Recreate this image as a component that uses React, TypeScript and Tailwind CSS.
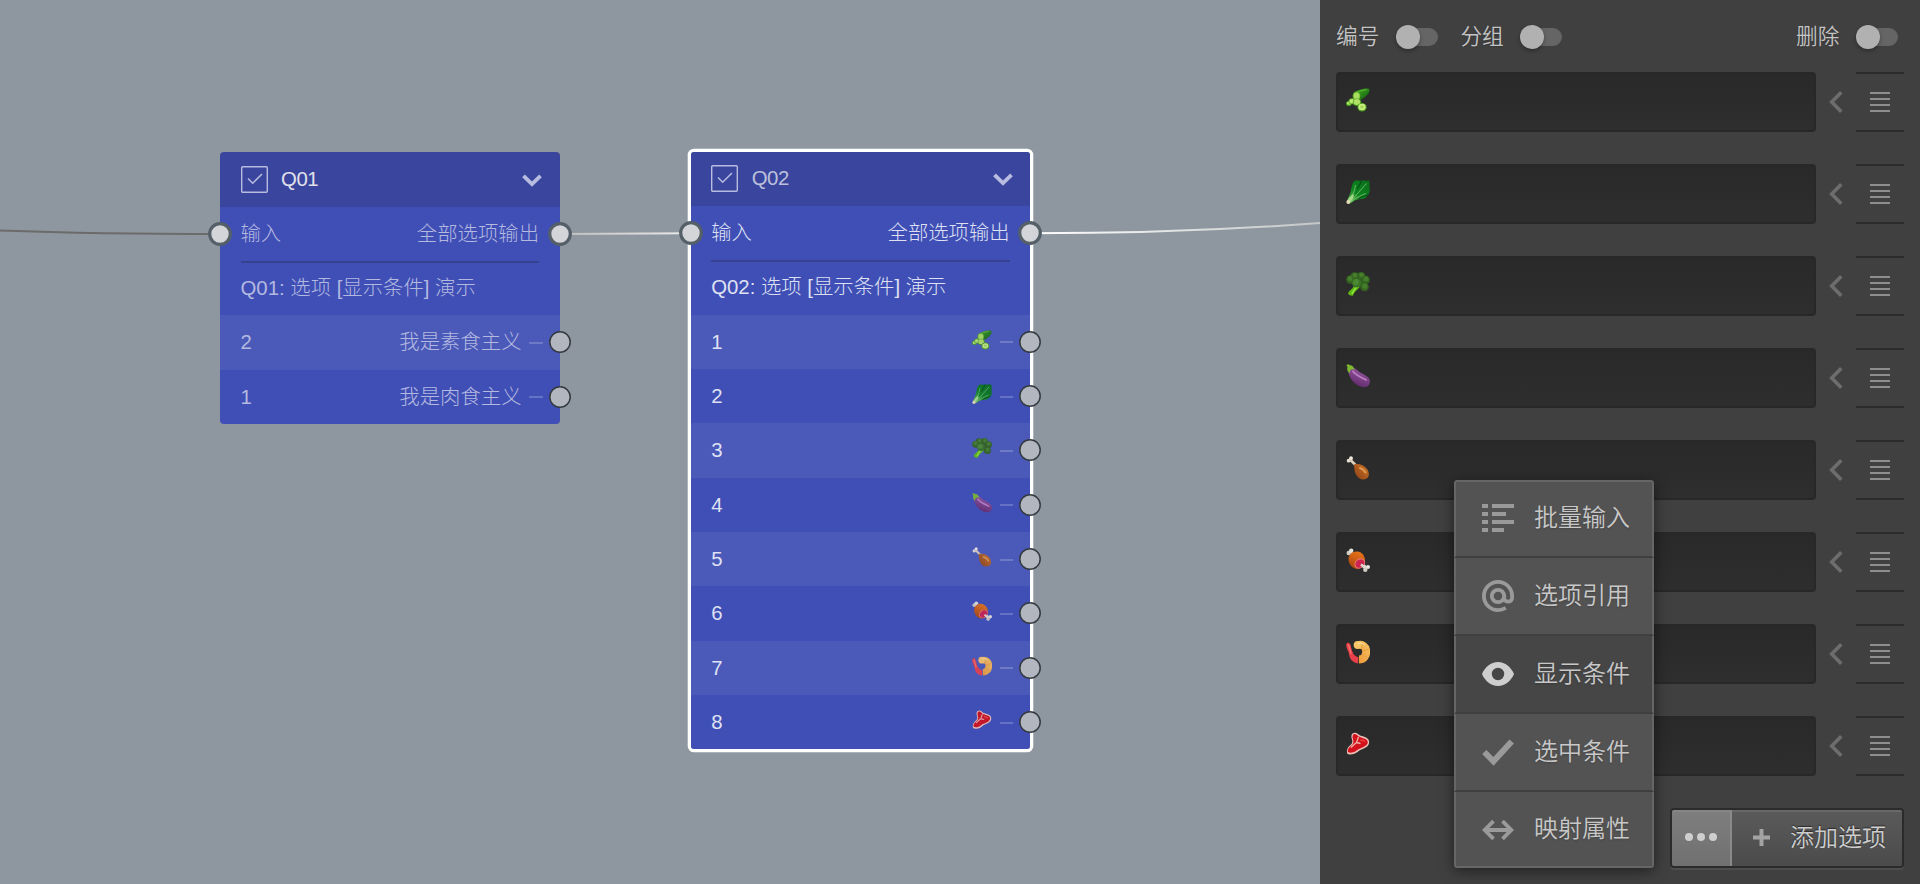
import type { ReactNode } from "react";

type Food = "cucumber" | "leaf" | "broccoli" | "eggplant" | "drumstick" | "meat" | "shrimp" | "steak";

const foods: Food[] = ["cucumber", "leaf", "broccoli", "eggplant", "drumstick", "meat", "shrimp", "steak"];

const foodArt: Record<Food, ReactNode> = {
  cucumber: (
    <>
      <path d="M8 5C11 1.800 18 .3 22 .5c2.200.3 2 3-.2 5.800C19.500 9.300 16 11.500 13 12.500Z" fill="url(#cucumberSkin)" />
      <path d="M12 4C14 2.700 17.500 1.700 20.500 1.900" stroke="#5cbb30" strokeWidth="1" fill="none" />
      <ellipse cx="2.800" cy="15.500" rx="2.800" ry="2.500" fill="#4aa51e" />
      <ellipse cx="2.900" cy="15.200" rx="1.900" ry="1.600" fill="#b9e86c" />
      <ellipse cx="10.500" cy="8" rx="3.900" ry="4.500" fill="#5aac25" />
      <ellipse cx="10.600" cy="8" rx="3" ry="3.600" fill="#a8dd5e" />
      <ellipse cx="6" cy="13.300" rx="3.400" ry="3" fill="#57a724" />
      <ellipse cx="6" cy="13.200" rx="2.500" ry="2.200" fill="#bce973" />
      <ellipse cx="11" cy="14.200" rx="4.200" ry="3.800" fill="#4d9e1f" />
      <ellipse cx="10.900" cy="14" rx="3.300" ry="2.900" fill="#b1e164" />
      <ellipse cx="16" cy="19.200" rx="4.600" ry="4.200" fill="#4c9f1e" />
      <ellipse cx="16" cy="19" rx="3.600" ry="3.200" fill="#cbee88" />
      <ellipse cx="16" cy="19" rx="2.100" ry="1.700" fill="#aada5a" />
    </>
  ),
  leaf: (
    <>
      <path d="M1 22.500C1.500 18 4.200 15 5 10.500 5.700 6 6.500 2 9 .8c2-.5 3.500.2 5 0 3-.6 5.500.1 9-.3 1.200 2.500.2 4.500.6 7 .3 3 .2 5.500-1.600 7.500-1.500 2.500-4 4-6.500 4-4 0-6.500 1-9.500 3.200-2 1.500-4.500 2-5 .3Z" fill="url(#leafBlade)" />
      <path d="M15.500.8C14.500 4 13 6.500 11 9M22 15c-3 .5-6 1.500-9 3.500" stroke="#045014" strokeWidth="1.200" fill="none" />
      <path d="M3 22C6 17 8.500 12 9.500 5M4 22C9 17 15 9.500 20.500 3.500M5 22c4-4 9-6 15-8.500" stroke="#8fd47c" strokeWidth=".7" fill="none" />
      <path d="M1 22C1.800 19 4 16.500 7 14c1 .8 1 3-.5 5L3.500 23Z" fill="#a9d98a" />
      <circle cx="2.300" cy="22" r="1.900" fill="#e6dcb6" />
    </>
  ),
  broccoli: (
    <>
      <path d="M8 12c1 4-5 6-6 9.500C3 23.500 6 24 7 23.500c1.500-4.500 5-5.500 7.500-9.500Z" fill="#5dba16" />
      <path d="M11.500 14c-2 2.500-4.500 4.500-5.500 8" stroke="#9de83a" strokeWidth="1.300" fill="none" />
      <g fill="#34641f">
        <circle cx="12.500" cy="8" r="7" />
        <circle cx="4.500" cy="7.500" r="4.300" />
        <circle cx="8.500" cy="4.200" r="4" />
        <circle cx="15" cy="4" r="4" />
        <circle cx="19.500" cy="8" r="4.400" />
        <circle cx="18.500" cy="15" r="4.300" />
      </g>
      <g fill="#457e2c">
        <circle cx="4" cy="6.500" r="2.500" />
        <circle cx="9" cy="3.200" r="2.300" />
        <circle cx="15.500" cy="3" r="2.300" />
        <circle cx="20" cy="7" r="2.500" />
        <circle cx="18.800" cy="14.200" r="2.600" />
      </g>
      <circle cx="10.500" cy="11" r="4.500" fill="#3b7426" />
      <circle cx="10" cy="10" r="2.900" fill="#4c8933" />
    </>
  ),
  eggplant: (
    <>
      <path d="M2.500 5C4.500 2.500 8 3 11 6c3.500 3.500 8 4.200 11.200 7.500 2.300 2.500 2.300 6.500-.2 8.500-3 2.200-8.500 1.200-12.500-2.200C5.500 16.500 1.500 10 2.500 5Z" fill="url(#eggplantSkin)" />
      <path d="M7 7.500C9.500 11 14 13 20 15.800" stroke="#bd80c3" strokeWidth="1.800" strokeLinecap="round" fill="none" />
      <path d="M.3 1 2.300.2 4 1.200c2.300 0 4 1.800 4.500 4.600-2-.8-3-.8-4.200.5-.5 1.300-.5 2-.8 3C1.200 7.500.8 5 1.500 3Z" fill="#7dba30" />
    </>
  ),
  drumstick: (
    <>
      <path d="m4.500 4 6 6" stroke="#dccdb9" strokeWidth="2.600" />
      <circle cx="2.600" cy="4.700" r="1.900" fill="#e5ddd0" />
      <circle cx="5" cy="2.200" r="1.900" fill="#efe9df" />
      <path d="M8 8.500c4-1.500 10 .5 13 4.500 2.500 3.500 2.500 7.500-.3 9.500-3.700 2.300-9 .5-11-4.500C8.300 15 8.300 12 8 8.500Z" fill="url(#roast)" />
      <path d="M14 12c2.500.8 4.500 2.500 5.500 4.500" stroke="#e39a50" strokeWidth="2" strokeLinecap="round" fill="none" />
    </>
  ),
  meat: (
    <>
      <path d="m4 4.500 4 4M15 15l5 5" stroke="#d8d5cd" strokeWidth="3.200" />
      <circle cx="2.700" cy="5" r="2.200" fill="#cfccc4" />
      <circle cx="5.200" cy="2.700" r="2.200" fill="#e6e4dd" />
      <path d="M2.500 11C2.500 6 7 2.700 12 3.500c4 .8 7 4.500 7 9 0 4-4 8.500-8 8.500-4.700-.5-8.500-5-8.500-10Z" fill="url(#ham)" />
      <ellipse cx="13.800" cy="15.500" rx="5.800" ry="4.700" transform="rotate(-38 13.800 15.500)" fill="#e8776a" />
      <ellipse cx="13.900" cy="15.600" rx="4.800" ry="3.800" transform="rotate(-38 13.900 15.600)" fill="#cb2450" />
      <path d="m15 16.500 5 4" stroke="#dedbd3" strokeWidth="2.600" />
      <circle cx="22" cy="18.900" r="2" fill="#e6e4dd" />
      <circle cx="19.300" cy="21.700" r="2.200" fill="#cfccc4" />
    </>
  ),
  shrimp: (
    <>
      <path d="M.2 4.500C1 2 3.500 2 4.500 4.800L6 10.500C7 14.500 9.500 16.500 12.500 17.500l-.5 6C7 22.500 3.800 19.500 3.200 15 2.800 11 0 8.500.2 4.500Z" fill="#e8404a" />
      <path d="M2.300 4.500C3.300 8.500 4.500 10 5 14" stroke="#f4756f" strokeWidth="1.300" fill="none" />
      <path d="M12 5.500c4-2 8.200 1 8.200 6.300 0 4.700-3 7.700-7.200 7.700" stroke="url(#shrimpCoat)" strokeWidth="8" fill="none" />
      <circle cx="11.700" cy="5" r="4" fill="#f9c367" />
      <path d="M16.500 3 15 9M23 9l-6 2M21.500 17.500 16.500 14.500" stroke="#e59a3c" strokeWidth=".8" fill="none" />
      <path d="M12 3.500c2-.7 4.500-.3 6 1" stroke="#fdd98f" strokeWidth="1.500" strokeLinecap="round" fill="none" />
    </>
  ),
  steak: (
    <>
      <path d="M5.500 3.500C6 .5 9.500-.3 12 2c2.500 2.500 7 2 10 5 2 2.500 1.300 6-1.500 8-4 2.500-6.500 2.500-9 5-2.500 2-6 3-9 2.300C.3 21.500.5 18 2 15.500c1.300-2 4-3 4.300-5.500C6.500 7.500 5 6 5.500 3.500Z" fill="#ecc0b9" />
      <path d="M6.700 3.500C7.300 1.700 9.300 1.300 11 3c2.500 3 7.500 2.500 10 5.200 1.500 2 .8 4-1.500 5.500-3.500 2.300-6.500 2.500-9 4.800-2 1.800-5 2.500-7.500 2-1.800-.5-1.300-2.700-.3-4.300 1.300-2 4.300-3 4.700-6C7.700 7.500 6 6 6.700 3.500Z" fill="#d4121b" />
      <path d="m12.500 5-2 5.500L5 15.500M10.500 10.500l4 1" stroke="#f0b2aa" strokeWidth="1.300" fill="none" />
      <path d="M14.500 8c2 .2 3 .5 4.500 1.500" stroke="#ee4544" strokeWidth="1.500" fill="none" />
    </>
  ),
};

function FoodDefs() {
  return (
    <svg width="0" height="0" className="absolute">
      <defs>
        <linearGradient id="cucumberSkin" x1="0" y1="0" x2="1" y2="1">
          <stop offset="0" stopColor="#49b51f" />
          <stop offset="1" stopColor="#0b5311" />
        </linearGradient>
        <linearGradient id="leafBlade" x1="1" y1="0" x2="0" y2="1">
          <stop offset="0" stopColor="#0a6d1a" />
          <stop offset=".55" stopColor="#0b8220" />
          <stop offset="1" stopColor="#6fc25a" />
        </linearGradient>
        <linearGradient id="eggplantSkin" x1=".7" y1="0" x2=".3" y2="1">
          <stop offset="0" stopColor="#9c5aa6" />
          <stop offset="1" stopColor="#5d2868" />
        </linearGradient>
        <linearGradient id="roast" x1="1" y1="0" x2="0" y2="1">
          <stop offset="0" stopColor="#cf7629" />
          <stop offset="1" stopColor="#8a3f13" />
        </linearGradient>
        <linearGradient id="ham" x1=".6" y1="0" x2=".2" y2="1">
          <stop offset="0" stopColor="#e87419" />
          <stop offset="1" stopColor="#a8420e" />
        </linearGradient>
        <linearGradient id="shrimpCoat" x1="1" y1="0" x2="0" y2="1">
          <stop offset="0" stopColor="#f6ba59" />
          <stop offset="1" stopColor="#ee9c3c" />
        </linearGradient>
      </defs>
    </svg>
  );
}

function FoodIcon({ kind, className }: { kind: Food; className: string }) {
  return (
    <svg viewBox="0 0 24 24" className={className}>
      {foodArt[kind]}
    </svg>
  );
}

function MainPort({ side }: { side: "left" | "right" }) {
  return (
    <svg
      width="24"
      height="24"
      viewBox="0 0 24 24"
      className={`absolute top-[15px] ${side === "left" ? "-left-[12px]" : "-right-[12px]"}`}
    >
      <circle cx="12" cy="12" r="10.300" fill="#d4d5d9" stroke="#545f67" strokeWidth="3.200" />
    </svg>
  );
}

function OptionRow({ code, shaded, children }: { code: string; shaded: boolean; children: ReactNode }) {
  return (
    <div
      className={`relative flex h-[54.33px] items-center justify-between pl-[20.5px] pr-[17px] ${
        shaded ? "bg-[#4b59b9]" : "bg-[#404fb5]"
      }`}
    >
      <span>{code}</span>
      <span className="flex items-center">
        {children}
        <span className="ml-[7.5px] mt-px h-[2px] w-[13.500px] bg-white/20" />
      </span>
      <svg width="22" height="22" viewBox="0 0 22 22" className="absolute -right-[11px] top-[16px]">
        <circle cx="11" cy="11" r="10.200" fill="#b2b6be" stroke="#343a40" strokeWidth="1.500" />
      </svg>
    </div>
  );
}

interface NodeCardProps {
  title: string;
  heading: string;
  frame: string;
  titleTone: string;
  tone: string;
  corner: string;
  children: ReactNode;
}

function NodeCard({ title, heading, frame, titleTone, tone, corner, children }: NodeCardProps) {
  return (
    <section className={`absolute w-[339.5px] text-[20.360px] leading-none ${frame} ${tone}`}>
      <header className={`flex h-[54.33px] items-center bg-[#3a459d] pl-[20.5px] pr-[17.500px] ${corner}`}>
        <svg width="27" height="27" viewBox="0 0 27 27" fill="none" className="text-[#b8bce0]">
          <rect x=".7" y=".7" width="25.600" height="25.600" rx="1" stroke="currentColor" strokeWidth="1.400" />
          <path d="m7 12.500 4.700 4.700L21 8" stroke="currentColor" strokeWidth="1.500" />
        </svg>
        <span className={`-mt-px ml-[13.5px] flex-1 tracking-[-0.4px] ${titleTone}`}>{title}</span>
        <svg width="20" height="13" viewBox="0 0 20 13" fill="none" className="mt-px">
          <path d="m1.500 1.800 8.500 8.400 8.500-8.400" stroke="#b8bce0" strokeWidth="3.800" />
        </svg>
      </header>
      <div className="relative flex h-[54.33px] items-center justify-between bg-[#404fb5] px-[20.5px] font-light">
        <MainPort side="left" />
        <span>输入</span>
        <span>全部选项输出</span>
        <MainPort side="right" />
      </div>
      <div className="h-[54.33px] bg-[#404fb5] px-[20.5px] font-light">
        <div className="flex h-full items-center border-t-2 border-[#36418f] pb-[3px]">{heading}</div>
      </div>
      <div className="font-light">{children}</div>
    </section>
  );
}

function Toggle({ label }: { label: string }) {
  return (
    <label className="flex items-center gap-[16.500px] text-[21.700px] leading-none text-[#c4c4c4]">
      <span>{label}</span>
      <span className="relative flex h-6 w-[42px] items-center justify-end">
        <span className="h-[18px] w-9 rounded-full bg-[#656565]" />
        <span className="absolute left-0 top-0 size-6 rounded-full bg-[#b1b1b1] shadow-[0_2px_4px_rgba(0,0,0,0.3)]" />
      </span>
    </label>
  );
}

function OptionEditor({ kind }: { kind: Food }) {
  return (
    <li className="flex h-[60px] items-center">
      <div className="flex h-full w-[480px] rounded-[4px] border-2 border-[#282828] bg-linear-to-b from-[#292929] to-[#2e2e2e] pl-2 pt-[14px]">
        <FoodIcon kind={kind} className="size-6" />
      </div>
      <svg width="14" height="24" viewBox="0 0 14 24" fill="none" className="ml-[13px]">
        <path d="M12.300 2.300 2.700 12l9.600 9.700" stroke="#6d6d6d" strokeWidth="3.600" />
      </svg>
      <div className="ml-[13px] flex h-full w-12 flex-col items-center justify-center gap-1 border-y-2 border-[#2b2b2b]">
        <span className="h-0.5 w-5 bg-[#8e8e8e]" />
        <span className="h-0.5 w-5 bg-[#8e8e8e]" />
        <span className="h-0.5 w-5 bg-[#8e8e8e]" />
        <span className="h-0.5 w-5 bg-[#8e8e8e]" />
      </div>
    </li>
  );
}

const menuItems: { label: string; active?: boolean; icon: ReactNode }[] = [
  {
    label: "批量输入",
    icon: (
      <path
        d="M0 2h6v4H0zM10 2h22v4H10zM0 10h6v4H0zM10 10h14v4H10zM0 18h6v4H0zM10 18h22v4H10zM0 26h6v4H0zM10 26h12v4H10z"
        fill="currentColor"
      />
    ),
  },
  {
    label: "选项引用",
    icon: (
      <g stroke="currentColor" strokeWidth="3.800" fill="none">
        <circle cx="16" cy="16" r="6.200" />
        <path d="M22.200 16v2.200c0 4.700 7.900 4.700 7.900-.2V16A14.100 14.100 0 1 0 16 30.100c3 0 5.500-.8 7.800-2.200" />
      </g>
    ),
  },
  {
    label: "显示条件",
    active: true,
    icon: (
      <path
        fillRule="evenodd"
        d="M16 4C8.800 4 2.700 9.500 0 16c2.700 6.500 8.800 12 16 12s13.300-5.500 16-12C29.300 9.500 23.200 4 16 4Zm0 5.800a6.200 6.200 0 1 1 0 12.400 6.200 6.200 0 0 1 0-12.400Z"
        fill="currentColor"
      />
    ),
  },
  {
    label: "选中条件",
    icon: <path d="m2.300 16 9.200 9.300L29.700 5.500" stroke="currentColor" strokeWidth="6" fill="none" />,
  },
  {
    label: "映射属性",
    icon: (
      <path
        d="M3 17h26M11.500 8.200 2.700 17l8.800 8.800M20.500 8.200l8.800 8.800-8.800 8.800"
        stroke="currentColor"
        strokeWidth="3.800"
        fill="none"
      />
    ),
  },
];

function OptionMenu() {
  return (
    <div className="absolute left-[134px] top-[480px] w-[200px] overflow-hidden rounded-[4px] bg-[#535353] text-2xl leading-none shadow-[0_3px_14px_rgba(0,0,0,0.5)]">
      {menuItems.map((item, i) => (
        <div
          key={item.label}
          className={`flex items-center border-x-2 border-x-[#666] pl-[26px] ${
            item.active ? "bg-[#464646] text-[#cecece]" : "text-[#9a9a9a]"
          } ${
            i === 0
              ? "h-[78px] border-y-2 border-b-[#3f3f3f] border-t-[#666] pb-[3px]"
              : i === menuItems.length - 1
                ? "h-[76px] border-b-2 border-b-[#666]"
                : "h-[78px] border-b-2 border-b-[#3f3f3f]"
          }`}
        >
          <svg width="32" height="32" viewBox="0 0 32 32">
            {item.icon}
          </svg>
          <span className="ml-5 text-[#c8c8c8]">{item.label}</span>
        </div>
      ))}
    </div>
  );
}

function OptionPanel() {
  return (
    <aside className="relative flex w-[600px] flex-col bg-[#404040] px-4 font-[350] [text-shadow:0_1px_2px_rgba(0,0,0,0.2)]">
      <div className="flex h-[72px] items-center gap-[22.500px] pr-1.5 pt-px">
        <Toggle label="编号" />
        <Toggle label="分组" />
        <div className="ml-auto">
          <Toggle label="删除" />
        </div>
      </div>
      <ul className="flex flex-col gap-8">
        {foods.map((kind) => (
          <OptionEditor key={kind} kind={kind} />
        ))}
      </ul>
      <div className="mt-8 flex h-[60px] w-[234px] self-end overflow-hidden rounded-[4px] border-2 border-[#2b2b2b] shadow-[0_2px_0_#4d4d4d]">
        <button className="flex w-[60px] items-center justify-center gap-1 border-r-2 border-t-2 border-r-[#8a8a8a] border-t-[#868686] bg-linear-to-b from-[#7e7e7e] to-[#707070] pb-1">
          <span className="size-2 rounded-full bg-[#cecece]" />
          <span className="size-2 rounded-full bg-[#cecece]" />
          <span className="size-2 rounded-full bg-[#cecece]" />
        </button>
        <button className="flex flex-1 items-center border-t-2 border-t-[#696969] bg-linear-to-b from-[#5a5a5a] to-[#4b4b4b] pb-[3px] pl-[21px] text-2xl leading-none text-[#cdcdcd]">
          <svg width="17" height="17" viewBox="0 0 17 17">
            <path d="M8.500 0v17M0 8.500h17" stroke="#a3a3a3" strokeWidth="4" />
          </svg>
          <span className="ml-5 [text-shadow:0_-1px_1px_rgba(0,0,0,0.5)]">添加选项</span>
        </button>
      </div>
      <OptionMenu />
    </aside>
  );
}

export default function App() {
  return (
    <div className="flex h-[884px] w-[1920px] overflow-hidden font-['Liberation_Sans','Noto_Sans_CJK_SC',sans-serif]">
      <FoodDefs />
      <main className="relative flex-1 overflow-hidden bg-[#8e979f]">
        <svg width="1320" height="884" viewBox="0 0 1320 884" fill="none" className="absolute left-0 top-0">
          <defs>
            <linearGradient id="wireA" gradientUnits="userSpaceOnUse" x1="560" y1="0" x2="690" y2="0">
              <stop offset="0" stopColor="#bdbdbd" />
              <stop offset="1" stopColor="#ececec" />
            </linearGradient>
            <linearGradient id="wireB" gradientUnits="userSpaceOnUse" x1="1030" y1="0" x2="1320" y2="0">
              <stop offset="0" stopColor="#fff" />
              <stop offset="1" stopColor="#c4c6c7" />
            </linearGradient>
          </defs>
          <path d="M0 230.500C70 233 130 234 220 234" stroke="#6b6b69" strokeWidth="1.800" />
          <path d="M560 234 691 233.300" stroke="url(#wireA)" strokeWidth="2" />
          <path d="M1030 233.300C1130 233.300 1220 230.500 1320 223" stroke="url(#wireB)" strokeWidth="2" />
        </svg>

        <NodeCard
          title="Q01"
          heading="Q01: 选项 [显示条件] 演示"
          frame="left-[220px] top-[152.400px]"
          corner="rounded-t-[4px]"
          titleTone="text-[#e0e1ea]"
          tone="text-[#b4b9e0]"
        >
          <OptionRow code="2" shaded>
            我是素食主义
          </OptionRow>
          <div className="[&>div]:rounded-b-[4px]">
            <OptionRow code="1" shaded={false}>
              我是肉食主义
            </OptionRow>
          </div>
        </NodeCard>

        <NodeCard
          title="Q02"
          heading="Q02: 选项 [显示条件] 演示"
          frame="left-[690.700px] top-[151.700px] rounded-[3px] shadow-[0_0_0_3.3px_#fff]"
          corner="rounded-t-[3px]"
          titleTone="text-[#bcc0dc]"
          tone="text-[#dfe1f3]"
        >
          {foods.map((kind, i) => (
            <div key={kind} className="last:[&>div]:rounded-b-[3px]">
              <OptionRow code={String(i + 1)} shaded={i % 2 === 0}>
                <FoodIcon kind={kind} className="mb-1 size-5 opacity-90" />
              </OptionRow>
            </div>
          ))}
        </NodeCard>
      </main>
      <OptionPanel />
    </div>
  );
}
